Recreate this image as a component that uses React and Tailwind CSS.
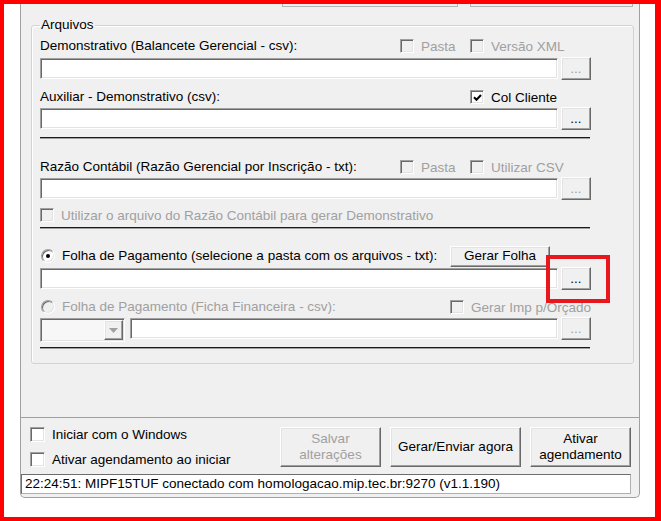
import React from "react"

// caixa 3D afundada (estilo Windows clássico)
const sunken =
  "border border-t-[#a0a0a0] border-l-[#a0a0a0] border-r-white border-b-white shadow-[inset_1px_1px_0_#696969,inset_-1px_-1px_0_#e3e3e3]"
const raised =
  "border border-t-white border-l-white border-r-[#696969] border-b-[#696969] shadow-[inset_-1px_-1px_0_#a0a0a0,inset_1px_1px_0_#e3e3e3]"

function Box({ checked, disabled, big }) {
  return (
    <span
      className={`flex shrink-0 items-center justify-center ${big ? "h-[15px] w-[15px]" : "h-[14px] w-[14px]"} ${sunken} ${
        disabled ? "bg-[#f0f0f0]" : "bg-white"
      }`}
    >
      {checked && (
        <svg width="9" height="9" viewBox="0 0 9 9">
          <path d="M1 4.2 L3.5 6.7 L8 2" stroke="#000" strokeWidth="2" fill="none" />
        </svg>
      )}
    </span>
  )
}

function Check({ label, checked, disabled, big, className = "" }) {
  return (
    <div className={`flex items-center gap-[7px] leading-[15px] ${className}`}>
      <Box checked={checked} disabled={disabled} big={big} />
      <span className={`whitespace-nowrap ${disabled ? "text-[#a0a0a0]" : "text-black"}`}>{label}</span>
    </div>
  )
}

function Radio({ label, checked, disabled, className = "" }) {
  return (
    <div className={`flex items-center gap-[7px] ${className}`}>
      <span
        className={`ml-[1px] flex h-[14px] w-[14px] shrink-0 items-center justify-center rounded-full border border-t-[#a0a0a0] border-l-[#a0a0a0] border-r-white border-b-white shadow-[inset_1px_1px_0_#696969,inset_-1px_-1px_0_#e3e3e3] ${
          disabled ? "bg-[#f0f0f0]" : "bg-white"
        }`}
      >
        {checked && <span className="h-[4px] w-[4px] rounded-full bg-black" />}
      </span>
      <span className={`whitespace-nowrap ${disabled ? "text-[#a0a0a0]" : "text-black"}`}>{label}</span>
    </div>
  )
}

function Field({ className = "" }) {
  return <div className={`h-[21px] bg-white ${sunken} ${className}`} />
}

function Dots({ disabled }) {
  return (
    <div className={`flex h-[23px] w-[30px] shrink-0 items-center justify-center bg-[#f0f0f0] ${raised}`}>
      <span className={`leading-none ${disabled ? "text-[#a0a0a0]" : "text-black"}`}>...</span>
    </div>
  )
}

function FileRow({ disabled, className = "" }) {
  return (
    <div className={`flex h-[23px] items-start gap-[3px] ${className}`}>
      <Field className="mt-[1px] w-[518px]" />
      <Dots disabled={disabled} />
    </div>
  )
}

function Sep({ className = "" }) {
  return <div className={`h-[2px] w-[550px] border-t border-b border-t-[#1a1a1a] border-b-[#a0a0a0] ${className}`} />
}

function Btn({ children, disabled, className = "" }) {
  return (
    <div
      className={`flex h-[40px] items-center justify-center bg-[#f0f0f0] text-center leading-[16px] ${raised} ${
        disabled ? "text-[#a0a0a0]" : "text-black"
      } ${className}`}
    >
      {children}
    </div>
  )
}

export default function App() {
  return (
    <div className="relative h-[521px] w-[661px] overflow-hidden border-t-4 border-b-4 border-l-4 border-r-[6px] border-[#ff0000] bg-white font-['Liberation_Sans',Arial,sans-serif] text-[13.5px] text-black">
      <div className="ml-[16px] flex h-[494px] w-[620px] flex-col rounded-b-[5px] border-x border-b border-[#a0a0a0] bg-[#f0f0f0]">
        {/* painel superior */}
        <div className="h-[414px] shrink-0 border-b border-[#a0a0a0]">
          <div className="flex h-[3px]">
            <div className="ml-[261px] w-[176px] border-x border-b border-[#b4b4b4]" />
            <div className="ml-[12px] w-[163px] border-x border-b border-[#b4b4b4]" />
          </div>

          <fieldset className="ml-[10px] mt-[10px] w-[603px] rounded-[3px] border border-[#d3d3d3] pb-[14px] pl-[8px] shadow-[inset_1px_1px_0_#fff]">
            <legend className="px-[1px] leading-[16px]">Arquivos</legend>
            <div className="flex w-[551px] flex-col">
              <div className="mt-[4px] flex h-[18px] items-center">
                <span className="w-[360px] whitespace-nowrap">Demonstrativo (Balancete Gerencial - csv):</span>
                <Check label="Pasta" disabled className="w-[70px]" />
                <Check label="Versão XML" disabled />
              </div>
              <FileRow disabled className="mt-[2px]" />

              <div className="mt-[8px] flex h-[18px] items-center">
                <span className="w-[430px] whitespace-nowrap">Auxiliar - Demonstrativo (csv):</span>
                <Check label="Col Cliente" checked />
              </div>
              <FileRow className="mt-[1px]" />

              <Sep className="mt-[7px]" />

              <div className="mt-[19px] flex h-[18px] items-center">
                <span className="w-[360px] whitespace-nowrap">Razão Contábil (Razão Gerencial por Inscrição - txt):</span>
                <Check label="Pasta" disabled className="w-[70px]" />
                <Check label="Utilizar CSV" disabled />
              </div>
              <FileRow disabled className="mt-[1px]" />

              <div className="mt-[6px] flex h-[18px] items-center">
                <Check label="Utilizar o arquivo do Razão Contábil para gerar Demonstrativo" disabled />
              </div>

              <Sep className="mt-[3px]" />

              <div className="mt-[16px] flex h-[22px] items-center">
                <Radio
                  label="Folha de Pagamento (selecione a pasta com os arquivos - txt):"
                  checked
                  className="w-[410px]"
                />
                <div className={`mt-[1px] flex h-[21px] w-[100px] items-center justify-center bg-[#f0f0f0] ${raised}`}>
                  Gerar Folha
                </div>
              </div>
              <FileRow />

              <div className="mt-[8px] flex h-[18px] items-center">
                <Radio label="Folha de Pagamento (Ficha Financeira - csv):" disabled className="w-[410px]" />
                <Check label="Gerar Imp p/Orçado" disabled className="ml-[1px]" />
              </div>

              <div className="mt-[1px] flex h-[25px] items-start">
                <div className={`mt-[1px] flex h-[24px] w-[85px] bg-[#f7f7f7] ${sunken}`}>
                  <div className="flex-1" />
                  <div className={`m-[1px] flex w-[19px] items-center justify-center bg-[#f0f0f0] ${raised}`}>
                    <svg width="9" height="5" viewBox="0 0 9 5">
                      <path d="M0 0 L9 0 L4.5 5 Z" fill="#a0a0a0" />
                    </svg>
                  </div>
                </div>
                <Field className="ml-[5px] mt-[1px] w-[428px]" />
                <div className="ml-[3px]">
                  <Dots disabled />
                </div>
              </div>

              <Sep className="mt-[5px]" />
            </div>
          </fieldset>
        </div>

        {/* rodapé */}
        <div className="ml-[9px] mt-[9px] flex h-[40px]">
          <div className="flex w-[250px] flex-col justify-between">
            <Check label="Iniciar com o Windows" big />
            <Check label="Ativar agendamento ao iniciar" big />
          </div>
          <Btn disabled className="w-[101px]">
            Salvar
            <br />
            alterações
          </Btn>
          <Btn className="ml-[9px] w-[131px]">Gerar/Enviar agora</Btn>
          <Btn className="ml-[9px] w-[101px]">
            Ativar
            <br />
            agendamento
          </Btn>
        </div>
        <div className="mt-[7px] h-[20px] w-[610px] border border-t-[#6d6d6d] border-l-[#6d6d6d] border-r-[#b0b0b0] border-b-[#b0b0b0] bg-white pl-[3px] leading-[18px] whitespace-nowrap">
          22:24:51: MIPF15TUF conectado com homologacao.mip.tec.br:9270 (v1.1.190)
        </div>
      </div>

      <div className="absolute left-[542px] top-[251px] h-[48px] w-[64px] border-4 border-[#e8161d]" />
    </div>
  )
}
